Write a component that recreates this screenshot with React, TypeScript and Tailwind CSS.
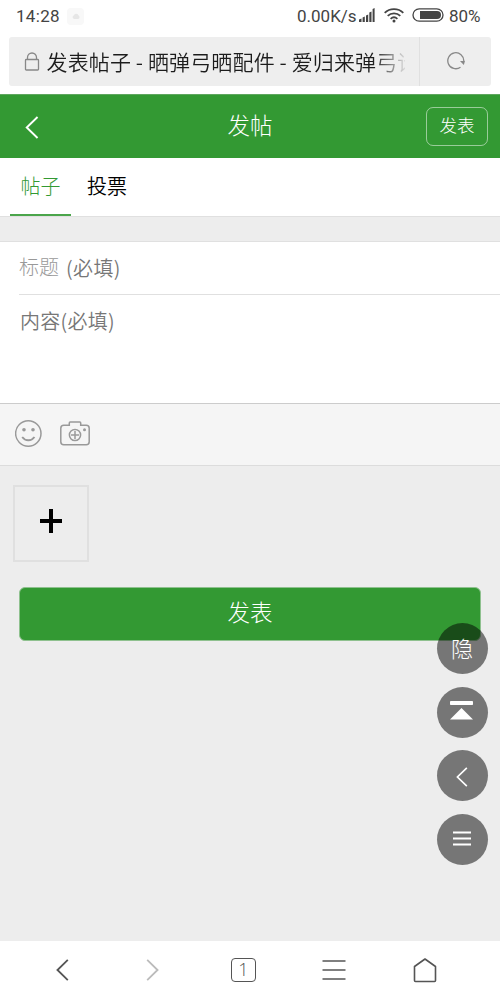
import type { ReactNode } from 'react'

function Chevron({ className }: { className: string }) {
    return (
        <svg
            viewBox="0 0 14 24"
            fill="none"
            stroke="currentColor"
            strokeWidth="2"
            className={className}
        >
            <path d="M12.800 1 1.500 12l11.300 11" />
        </svg>
    )
}

function StatusBar() {
    return (
        <div className="flex h-[37px] items-start justify-between pr-[17px] pl-4 font-['Roboto','Noto_Sans_CJK_SC',sans-serif] text-[17px] leading-8 font-normal text-[#444]">
            <div className="flex items-center">
                <span className="w-[44px] tracking-[0.3px]">14:28</span>
                <span className="ml-[7px] flex h-[17px] w-[17px] items-center justify-center rounded-sm bg-[#f8f8f8]">
                    <svg viewBox="0 0 8 6" className="h-[6px] w-2 fill-[#e6e6e6]">
                        <path d="M2 6a2 2 0 0 1 0-3.800 2.300 2.300 0 0 1 4.300 0A2 2 0 0 1 6 6z" />
                    </svg>
                </span>
            </div>
            <div className="flex items-center">
                <span className="w-[62px] whitespace-nowrap">0.00K/s</span>
                <svg viewBox="0 0 16 14" className="mb-[2px] h-[14px] w-4 fill-[#444]">
                    <path d="M0 11.500 2.500 10.500V14H0zM3.600 9.500l2.200-1V14H3.600zM7 7.500l2.200-1V14H7zM10.300 4.500l2.200-1V14h-2.200zM13.600 1l2-1v14h-2z" />
                </svg>
                <svg
                    viewBox="0 0 20 15"
                    fill="none"
                    stroke="#444"
                    strokeWidth="1.800"
                    className="mb-[2px] ml-[9px] h-[15px] w-5"
                >
                    <path d="M.7 4.800C5.800-.2 14.200-.2 19.300 4.800M3.700 7.800c3.500-3.300 9.100-3.300 12.600 0M6.600 10.800c2-1.800 4.800-1.800 6.800 0" />
                    <circle cx="10" cy="13" r="1.500" fill="#444" stroke="none" />
                </svg>
                <svg viewBox="0 0 32 14" fill="none" className="mb-[2px] ml-[8px] h-[14px] w-8">
                    <rect x="1" y=".8" width="30" height="12.400" rx="6.200" stroke="#444" strokeWidth="1.300" />
                    <path d="M8 3h17a4 4 0 0 1 0 8H8z" fill="#444" />
                </svg>
                <span className="ml-[5px] w-[34px] whitespace-nowrap">80%</span>
            </div>
        </div>
    )
}

function AddressBar() {
    return (
        <div className="mx-[9px] flex h-[49px] rounded-[3px] bg-[#eee]">
            <div className="flex w-[411px] items-center border-r border-[#e0e0e0] pl-[15px]">
                <svg
                    viewBox="0 0 16 19"
                    fill="none"
                    stroke="#888"
                    strokeWidth="1.300"
                    className="h-[19px] w-4 shrink-0"
                >
                    <rect x="1.500" y="7.500" width="13" height="10.500" rx=".8" />
                    <path d="M3.500 7.500V5.500a4.500 4.500 0 0 1 9 0v2" />
                </svg>
                <div className="mb-[2px] ml-[6.500px] w-[358px] overflow-hidden bg-[linear-gradient(to_right,#1c1c1c_91%,#eee_101%)] bg-clip-text text-[21px] leading-[30px] font-[350] tracking-[0.130px] whitespace-nowrap text-transparent">
                    发表帖子 - 晒弹弓晒配件 - 爱归来弹弓论
                </div>
            </div>
            <div className="flex flex-1 items-center justify-center pb-[2px]">
                <svg viewBox="0 0 18 18" fill="none" className="h-[18px] w-[18px]">
                    <path d="M13.500 15.200A8 8 0 1 1 16.800 9" stroke="#888" strokeWidth="1.300" />
                    <path d="M13 9h5l-1.200 4z" fill="#888" />
                </svg>
            </div>
        </div>
    )
}

function FloatButton({ children }: { children: ReactNode }) {
    return (
        <button className="flex h-[51px] w-[51px] items-center justify-center rounded-full bg-black/50 text-white">
            {children}
        </button>
    )
}

export default function App() {
    return (
        <div className="relative flex h-[1000px] w-[500px] flex-col overflow-hidden bg-[#ededed] font-['Noto_Sans_CJK_SC',sans-serif] font-light">
            <div className="h-[94px] bg-white">
                <StatusBar />
                <AddressBar />
            </div>

            <header className="grid h-16 grid-cols-3 items-center border-t border-[#5fa75f] bg-[#393] pr-3 pl-[25px] text-white">
                <Chevron className="mt-[2px] h-[23px] w-[14px]" />
                <h1 className="-ml-[13px] pb-[5px] text-center text-[22.500px] leading-8">
                    发帖
                </h1>
                <button className="h-[39px] w-[62px] justify-self-end rounded-[7px] border border-white/50 pb-[4px] text-[17.500px] leading-6">
                    发表
                </button>
            </header>

            <nav className="flex h-[58px] bg-white pl-[10px] text-[20px] leading-[56px]">
                <a className="w-[61px] border-b-2 border-[#4ba54b] text-center text-[#393]">
                    帖子
                </a>
                <a className="ml-4 font-[350] text-black">投票</a>
            </nav>

            <div className="h-[26px] border-y border-[#e0e0e0]" />

            <div className="h-[161px] bg-white pl-[19px] text-[20px] text-[#777]">
                <div className="flex h-[53px] border-b border-[#e0e0e0] leading-[52px]">
                    <span className="leading-[50px] text-[#999]">标题</span>
                    <span className="ml-[7px] font-[350] tracking-[0.400px]">(必填)</span>
                </div>
                <div className="pl-px leading-[51px] font-[350] tracking-[0.300px]">
                    内容(必填)
                </div>
            </div>

            <div className="flex h-[63px] items-center gap-[18px] border-y border-t-[#ccc] border-b-[#dcdcdc] bg-[#f5f5f5] pb-[3px] pl-[15px]">
                <svg
                    viewBox="0 0 27 27"
                    fill="none"
                    stroke="#999"
                    strokeWidth="1.500"
                    className="h-[27px] w-[27px]"
                >
                    <circle cx="13.300" cy="13.500" r="12.700" />
                    <path d="M7.200 17c3 4.300 9.300 4.300 12.300 0" strokeWidth="1.800" />
                    <circle cx="9" cy="9.700" r="1.800" fill="#999" stroke="none" />
                    <circle cx="18" cy="9.700" r="1.800" fill="#999" stroke="none" />
                </svg>
                <svg
                    viewBox="0 0 30 25"
                    fill="none"
                    stroke="#999"
                    strokeWidth="1.500"
                    className="h-[25px] w-[30px]"
                >
                    <path d="M3.800 4.300h5.500V2q0-.9.900-.9h9.600q.9 0 .9.900v2.300h5.500q3 0 3 3v13.400q0 3-3 3H3.800q-3 0-3-3V7.300q0-3 3-3z" />
                    <circle cx="15" cy="14" r="5.600" />
                    <path d="M15 10v8M11 14h8" />
                    <circle cx="24.500" cy="8.700" r="1.500" fill="#999" stroke="none" />
                </svg>
            </div>

            <div className="flex-1 pt-[19px]">
                <button className="ml-[13px] flex h-[77px] w-[76px] items-center justify-center border-2 border-[#e0e0e0] pb-[5px]">
                    <svg viewBox="0 0 22 24" className="h-6 w-[22px] fill-black">
                        <path d="M9 0h4v10h9v4h-9v10H9V14H0v-4h9z" />
                    </svg>
                </button>
                <button className="mt-[25px] ml-[19px] h-[54px] w-[462px] rounded-md border border-[#8fc18f] bg-[#393] pb-[5px] text-[22.500px] text-white">
                    发表
                </button>
            </div>

            <footer className="grid h-[59px] grid-cols-5 place-items-center bg-white pr-[30px] pb-px pl-[17px] text-[#555]">
                <Chevron className="h-[22px] w-[13px]" />
                <Chevron className="h-[22px] w-[13px] rotate-180 text-[#bbb]" />
                <span className="flex h-6 w-[25px] items-center justify-center rounded border-[1.500px] border-[#555] pb-[2px] font-['Open_Sans',sans-serif] text-lg leading-none">
                    1
                </span>
                <svg viewBox="0 0 24 20" stroke="currentColor" strokeWidth="1.600" className="h-5 w-6">
                    <path d="M.5 1h23M.5 10h23M.5 19h23" />
                </svg>
                <svg
                    viewBox="0 0 24 25"
                    fill="none"
                    stroke="currentColor"
                    strokeWidth="1.600"
                    strokeLinejoin="round"
                    className="h-[25px] w-6"
                >
                    <path d="M1.500 8.500 12 1l10.500 7.500v14q0 1-1 1h-19q-1 0-1-1z" />
                </svg>
            </footer>

            <div className="absolute top-[623px] right-[12.500px] flex flex-col gap-[12.600px]">
                <FloatButton>
                    <span className="pb-[4px] text-[22px] leading-8">隐</span>
                </FloatButton>
                <FloatButton>
                    <svg viewBox="0 0 23 19" className="mr-[2px] mb-[4px] h-[19px] w-[23px] fill-white">
                        <rect width="23" height="4" rx=".8" />
                        <path d="M11.500 7 23 18.500H0z" />
                    </svg>
                </FloatButton>
                <FloatButton>
                    <Chevron className="mt-[2px] h-5 w-3" />
                </FloatButton>
                <FloatButton>
                    <svg viewBox="0 0 18 15" stroke="#fff" strokeWidth="2" className="mb-[2px] h-[15px] w-[18px]">
                        <path d="M0 1.500h18M0 7.500h18M0 13.500h18" />
                    </svg>
                </FloatButton>
            </div>
        </div>
    )
}
